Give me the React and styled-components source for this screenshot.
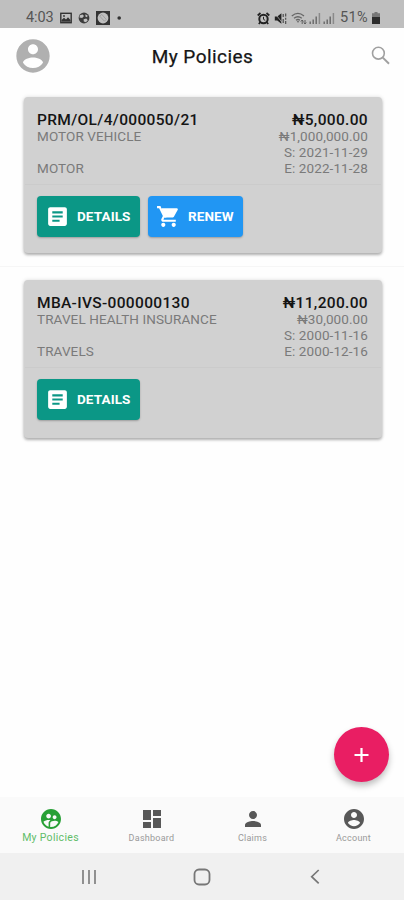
import React from "react";
import styled, { createGlobalStyle } from "styled-components";
import { MdArticle, MdDashboard, MdPerson, MdSupervisedUserCircle } from "react-icons/md";

const GlobalStyle = createGlobalStyle`
  * {
    box-sizing: border-box;
  }
  body {
    margin: 0;
    background: #fff;
    font-family: Roboto, "Noto Sans", sans-serif;
  }
`;

const Screen = styled.div`
  position: relative;
  width: 404px;
  height: 900px;
  display: flex;
  flex-direction: column;
  overflow: hidden;
  background: #fefefe;
`;

const StatusBar = styled.div`
  height: 28px;
  flex: none;
  display: flex;
  align-items: center;
  justify-content: space-between;
  padding: 8px 24px 0 26px;
  background: #bfbfbf;
  color: #555;
  font-size: 14.5px;
  line-height: 20px;
  white-space: nowrap;
  & svg {
    display: block;
    flex: none;
  }
`;
const StatusGroup = styled.div`
  display: flex;
  align-items: center;
  gap: ${({ $gap }) => $gap}px;
`;
const Clock = styled.span`
  width: 28px;
  letter-spacing: -0.1px;
`;
const Battery = styled.span`
  width: 30px;
  margin-left: 3px;
  letter-spacing: 0.3px;
`;

const Header = styled.header`
  height: 56px;
  flex: none;
  display: grid;
  grid-template-columns: 40px 1fr 40px;
  align-items: center;
  padding: 0 12px 0 13px;
  & h1 {
    margin: 0;
    text-align: center;
    font-size: 19px;
    font-weight: 400;
    letter-spacing: 0.45px;
    color: #151515;
    -webkit-text-stroke: 0.25px #151515;
  }
  & svg {
    display: block;
    color: #b0b0b0;
  }
  & svg:last-child {
    justify-self: end;
  }
`;

const Policies = styled.main`
  flex: 1;
  padding-top: 13px;
`;
const PolicyRow = styled.div`
  padding: 0 22px 13px 24px;
  & + & {
    padding-top: 13px;
    border-top: 1px solid #f6f6f6;
  }
`;
const Card = styled.section`
  height: ${({ $height }) => $height}px;
  padding: 12px 0 0;
  border-radius: 4px;
  background: #d1d1d1;
  box-shadow: 0 2px 3px rgba(0, 0, 0, 0.28), 0 0 4px rgba(0, 0, 0, 0.12);
`;
const Summary = styled.div`
  display: flex;
  justify-content: space-between;
  height: 75px;
  padding: 0 14px 0 13px;
  white-space: nowrap;
`;
const Column = styled.div`
  display: flex;
  flex-direction: column;
  align-items: ${({ $right }) => ($right ? "flex-end" : "flex-start")};
`;
const Strong = styled.strong`
  height: 20px;
  line-height: 22px;
  font-size: 15.5px;
  font-weight: 500;
  letter-spacing: 0.33px;
  color: #151515;
`;
const Line = styled.span`
  height: 16px;
  line-height: 15px;
  font-size: 13.5px;
  letter-spacing: 0.1px;
  color: #7a7a7a;
`;
const Actions = styled.div`
  display: flex;
  gap: 8px;
  margin: 0 1px;
  padding: 11px 12px 0;
  border-top: 1px solid #cbcbcb;
`;
const Button = styled.button`
  width: ${({ $blue }) => ($blue ? 95 : 103)}px;
  height: 41px;
  display: flex;
  align-items: center;
  padding: 0 0 1px 8px;
  gap: 7px;
  border: none;
  border-radius: 4px;
  background: ${({ $blue }) => ($blue ? "#2196f3" : "#0b9786")};
  box-shadow: 0 1px 2px rgba(0, 0, 0, 0.25);
  color: #fff;
  font-family: inherit;
  font-size: 13.5px;
  font-weight: 700;
  letter-spacing: 0.1px;
  cursor: pointer;
  & svg {
    flex: none;
  }
`;

const AddButton = styled.button`
  position: absolute;
  right: 15px;
  bottom: 118px;
  width: 55px;
  height: 55px;
  display: flex;
  align-items: center;
  justify-content: center;
  padding: 0;
  border: none;
  border-radius: 50%;
  background: #e91e63;
  box-shadow: 0 4px 6px rgba(0, 0, 0, 0.25);
`;

const Tabs = styled.nav`
  height: 56px;
  flex: none;
  display: grid;
  grid-template-columns: repeat(4, 1fr);
  background: #fafafa;
`;
const Tab = styled.a`
  display: flex;
  flex-direction: column;
  align-items: center;
  padding-top: 10px;
  color: ${({ $active }) => ($active ? "#28a036" : "#585858")};
  font-size: ${({ $active }) => ($active ? 10.5 : 9)}px;
  line-height: 13px;
  letter-spacing: ${({ $active }) => ($active ? 0.3 : 0.25)}px;
  white-space: nowrap;
  & span {
    margin-top: ${({ $active }) => ($active ? 0 : 1)}px;
    color: ${({ $active }) => ($active ? "#5fbd69" : "#999")};
  }
`;

const SystemNav = styled.div`
  height: 47px;
  flex: none;
  display: flex;
  align-items: center;
  justify-content: center;
  gap: 95px;
  background: #f0f0f0;
`;

const policies = [
  {
    number: "PRM/OL/4/000050/21",
    product: "MOTOR VEHICLE",
    type: "MOTOR",
    premium: "₦5,000.00",
    insured: "₦1,000,000.00",
    start: "2021-11-29",
    end: "2022-11-28",
    renewable: true,
    height: 156,
  },
  {
    number: "MBA-IVS-000000130",
    product: "TRAVEL HEALTH INSURANCE",
    type: "TRAVELS",
    premium: "₦11,200.00",
    insured: "₦30,000.00",
    start: "2000-11-16",
    end: "2000-12-16",
    height: 158,
  },
];

const tabs = [
  { label: "My Policies", Icon: MdSupervisedUserCircle, active: true },
  { label: "Dashboard", Icon: MdDashboard },
  { label: "Claims", Icon: MdPerson },
  { label: "Account", Icon: AccountIcon },
];

function AccountIcon({ size }) {
  return (
    <svg width={size} height={size} viewBox="0 0 24 24" fill="currentColor">
      <path d="M12 2C6.48 2 2 6.48 2 12s4.48 10 10 10 10-4.48 10-10S17.52 2 12 2zm0 3c1.66 0 3 1.34 3 3s-1.34 3-3 3-3-1.34-3-3 1.34-3 3-3zm0 14.2c-2.5 0-4.71-1.28-6-3.22.03-1.99 4-3.08 6-3.08 1.99 0 5.97 1.09 6 3.08-1.29 1.94-3.5 3.22-6 3.22z" />
    </svg>
  );
}

function CartIcon({ size }) {
  return (
    <svg width={size} height={size} viewBox="0 0 24 24" fill="currentColor">
      <path d="M5.2 4H20c.8 0 1.2.8.9 1.5l-3.6 6.5c-.3.6-1 1-1.7 1H8.1Z" />
      <path d="M7 18c-1.1 0-1.99.9-1.99 2S5.9 22 7 22s2-.9 2-2-.9-2-2-2zM1 2v2h2l3.6 7.59-1.35 2.45c-.16.28-.25.61-.25.96 0 1.1.9 2 2 2h12v-2H7.42c-.14 0-.25-.11-.25-.25l.03-.12.9-1.63h2L5.21 4l-.94-2H1zm16 16c-1.1 0-1.99.9-1.99 2s.89 2 1.99 2 2-.9 2-2-.9-2-2-2z" />
    </svg>
  );
}

function SearchIcon() {
  return (
    <svg width="22" height="22" viewBox="0 0 22 22">
      <circle cx="8.4" cy="8.2" r="5.9" fill="none" stroke="#a0a0a0" strokeWidth="1.6" />
      <path d="m12.8 12.6 6.2 6.2" stroke="#a0a0a0" strokeWidth="2" />
    </svg>
  );
}

function PictureIcon() {
  return (
    <svg width="12" height="12" viewBox="0 0 12 12">
      <rect x="0.8" y="1.3" width="10.4" height="9.4" fill="none" stroke="#333" strokeWidth="1.4" />
      <path d="M1.5 9.8V8L4 5.8 6 7.5l2-2.2L10.5 8v1.8Z" fill="#333" />
      <circle cx="4" cy="4" r="0.9" fill="#333" />
    </svg>
  );
}

function BallIcon() {
  return (
    <svg width="12" height="12" viewBox="0 0 12 12">
      <circle cx="6" cy="6" r="5.4" fill="#3c3c3c" />
      <path d="m2 3.2 2.6-.8L6 4 4.2 6 1.4 5.6ZM7.4 2.2l2.2 1.2-.5 1.8-1.7-.6ZM5.6 7.2l2.7-.6 1.5 1.6-1.9 2-2.1-.7Z" fill="#bfbfbf" />
    </svg>
  );
}

function FrameIcon() {
  return (
    <svg width="14" height="14" viewBox="0 0 14 14">
      <rect width="14" height="14" fill="#333" />
      <circle cx="7" cy="7" r="5.4" fill="#bfbfbf" />
      <path d="m3.8 5.2 2-1.8 4.4 5-1.8 1.8Z" fill="none" stroke="#999" strokeWidth="0.8" />
    </svg>
  );
}

function AlarmIcon() {
  return (
    <svg width="13" height="13" viewBox="0 0 13 13">
      <circle cx="6.5" cy="7" r="4.2" fill="none" stroke="#222" strokeWidth="2" />
      <path d="M.7 3.5 3.5 1M12.3 3.5 9.5 1M3.2 10.2 1.8 12M9.8 10.2l1.4 1.8" stroke="#222" strokeWidth="1.7" />
      <path d="M6.5 4.8v2.5L8.2 8.4" fill="none" stroke="#222" />
    </svg>
  );
}

function MuteIcon() {
  return (
    <svg width="13" height="13" viewBox="0 0 13 13">
      <path d="M.8 4.5h2.5L7.4 1.3v10.4L3.3 8.5H.8Z" fill="#222" />
      <path d="m1 1.5 7.5 9.5" stroke="#bfbfbf" strokeWidth="0.7" />
      <path d="M9.2 2v3M9.2 7v4M11.7 1.5v3M11.7 5.8v2M11.7 9v3" stroke="#444" strokeWidth="1.1" />
    </svg>
  );
}

function WifiIcon() {
  return (
    <svg width="16" height="13" viewBox="0 0 16 13">
      <path d="M.8 4C4.6.7 9.2.7 13 4M3 6.3c2.5-2 5.3-2 7.8 0M5 8.3c1.3-1 2.7-1 4 0" fill="none" stroke="#666" strokeWidth="1.3" />
      <path d="M5.8 9.2 7 10.8l1.2-1.6Z" fill="#555" />
      <path d="M11.2 12V8M9.8 9.5l1.4-1.5 1.3 1.5M14 8v4M12.8 10.5 14 12l1.3-1.5" fill="none" stroke="#555" strokeWidth="0.9" />
    </svg>
  );
}

function SignalIcon() {
  return (
    <svg width="12" height="12" viewBox="0 0 12 12">
      <path d="M1.2 9.5V12M4.2 7.5V12M7.2 4.5V12" stroke="#666" strokeWidth="1.4" />
      <path d="M10.4 1v11" stroke="#8a8a8a" strokeWidth="1.5" />
    </svg>
  );
}

function BatteryIcon() {
  return (
    <svg width="8" height="12" viewBox="0 0 8 12">
      <path d="M2.5 0h3v1.3H8V12H0V1.3h2.5Z" fill="#777" />
      <path d="M0 5h8v7H0Z" fill="#2c2c2c" />
    </svg>
  );
}

function Policy({ policy }) {
  return (
    <PolicyRow>
      <Card $height={policy.height}>
        <Summary>
          <Column>
            <Strong>{policy.number}</Strong>
            <Line>{policy.product}</Line>
            <Line />
            <Line>{policy.type}</Line>
          </Column>
          <Column $right>
            <Strong>{policy.premium}</Strong>
            <Line>{policy.insured}</Line>
            <Line>S: {policy.start}</Line>
            <Line>E: {policy.end}</Line>
          </Column>
        </Summary>
        <Actions>
          <Button>
            <MdArticle size={25} />
            DETAILS
          </Button>
          {policy.renewable && (
            <Button $blue>
              <CartIcon size={25} />
              RENEW
            </Button>
          )}
        </Actions>
      </Card>
    </PolicyRow>
  );
}

function App() {
  return (
    <Screen>
      <GlobalStyle />
      <StatusBar>
        <StatusGroup $gap={6}>
          <Clock>4:03</Clock>
          <PictureIcon />
          <BallIcon />
          <FrameIcon />
          <svg width="8" height="12" viewBox="0 0 8 12">
            <circle cx="3.2" cy="6" r="1.8" fill="#333" />
          </svg>
        </StatusGroup>
        <StatusGroup $gap={2}>
          <StatusGroup $gap={4}>
            <AlarmIcon />
            <MuteIcon />
            <WifiIcon />
          </StatusGroup>
          <SignalIcon />
          <SignalIcon />
          <Battery>51%</Battery>
          <BatteryIcon />
        </StatusGroup>
      </StatusBar>
      <Header>
        <AccountIcon size={40} />
        <h1>My Policies</h1>
        <SearchIcon />
      </Header>
      <Policies>
        {policies.map((policy) => (
          <Policy key={policy.number} policy={policy} />
        ))}
      </Policies>
      <AddButton aria-label="Add policy">
        <svg width="16" height="16" viewBox="0 0 16 16">
          <path d="M7.5 1v14M.5 8h14" stroke="#fff" strokeWidth="2.2" />
        </svg>
      </AddButton>
      <Tabs>
        {tabs.map(({ label, Icon, active }) => (
          <Tab key={label} $active={active}>
            <Icon size={24} />
            <span>{label}</span>
          </Tab>
        ))}
      </Tabs>
      <SystemNav>
        <svg width="18" height="18" viewBox="0 0 18 18">
          <path d="M3 2v14M9 2v14M15 2v14" stroke="#8c8c8c" strokeWidth="1.9" />
        </svg>
        <svg width="18" height="18" viewBox="0 0 18 18">
          <rect x="1.5" y="1.5" width="15" height="15" rx="4.5" fill="none" stroke="#777" strokeWidth="1.8" />
        </svg>
        <svg width="18" height="18" viewBox="0 0 18 18">
          <path d="M12.7 2 5.7 8.7l7 6.7" fill="none" stroke="#777" strokeWidth="1.7" />
        </svg>
      </SystemNav>
    </Screen>
  );
}

export default App;
